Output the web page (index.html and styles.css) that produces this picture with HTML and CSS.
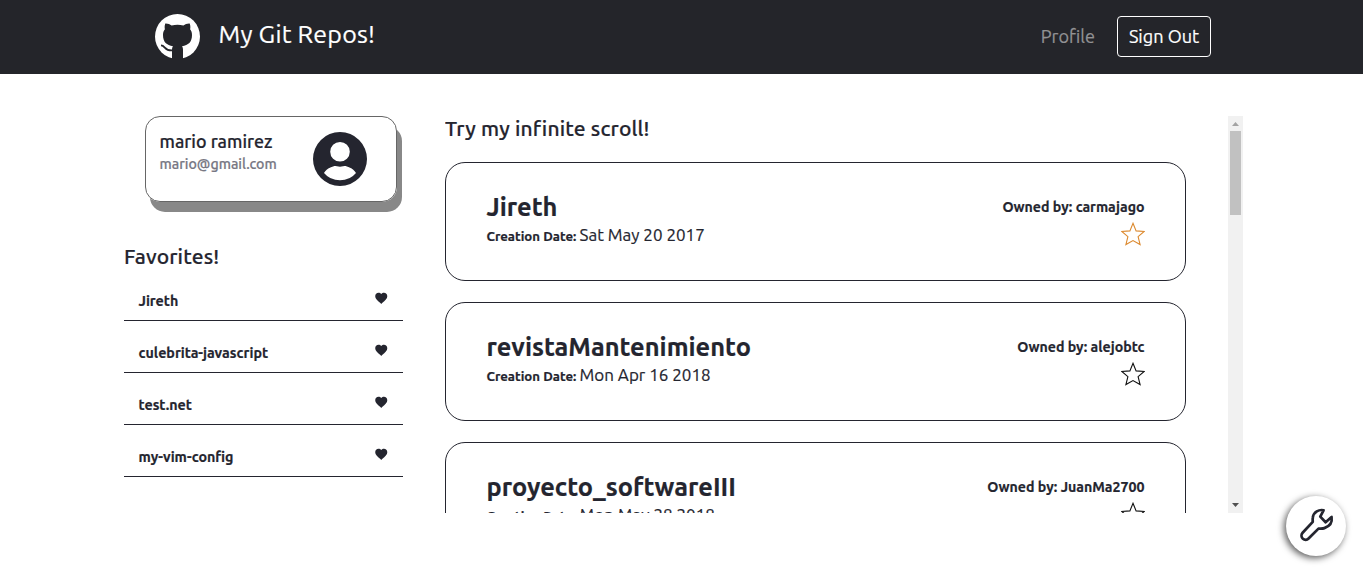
FILE: index.html
```html
<!DOCTYPE html>
<html lang="en">
<head>
<meta charset="utf-8">
<title>My Git Repos!</title>
<link rel="stylesheet" href="styles.css">
</head>
<body>
<svg width="0" height="0" class="defs">
  <symbol id="heart" viewBox="0 0 24 24"><path d="M12 21.35l-1.45-1.32C5.4 15.36 2 12.28 2 8.5 2 5.42 4.42 3 7.5 3c1.74 0 3.41.81 4.5 2.09C13.09 3.81 14.76 3 16.5 3 19.58 3 22 5.42 22 8.5c0 3.78-3.4 6.86-8.55 11.54L12 21.35z"/></symbol>
  <symbol id="star" viewBox="0 0 24 24"><path d="M12 1.3 15.1 8.9 23.2 9.5 17.1 14.7 19.1 22.6 12 18.6 4.9 22.6 6.9 14.7.8 9.5 8.9 8.9Z"/></symbol>
</svg>
<header class="navbar">
  <a class="brand">
    <svg class="logo" viewBox="0 0 45 45">
      <circle cx="22.5" cy="22.5" r="22.5"/>
      <path class="cat" d="M10.300 9.500C12.700 9.300 14.800 10.300 16.600 11.400Q22.500 10.300 28.400 11.400C30.200 10.300 32.300 9.300 34.700 9.500 35.500 11.500 35.500 13.500 35.100 15.300 36.400 16.900 37 18.700 37 21 37 28 33.300 31.300 27 32.200 27.800 33.300 28 34.500 28 36V46H17V36C17 34.500 17.200 33.300 18 32.200 11.700 31.300 8 28 8 21 8 18.700 8.600 16.900 9.900 15.300 9.500 13.500 9.500 11.500 10.300 9.500Z"/>
      <path class="tail" d="M6 31.400C10.500 31.400 9.500 37.200 17.500 36.400"/>
    </svg>
    <span class="brand-name">My Git Repos!</span>
  </a>
  <nav class="nav">
    <a class="profile-link">Profile</a>
    <button class="sign-out">Sign Out</button>
  </nav>
</header>
<main class="content">
  <aside class="sidebar">
    <section class="user-card">
      <div class="user-text">
        <div class="user-name">mario ramirez</div>
        <div class="user-mail">mario@gmail.com</div>
      </div>
      <svg class="avatar" viewBox="0 0 54 54"><path fill-rule="evenodd" d="M27 0a27 27 0 1 1 0 54a27 27 0 0 1 0-54ZM27 10a9.8 9.8 0 1 0 0 19.6a9.8 9.8 0 0 0 0-19.6ZM11 41Q17 48.3 27 48.3T43 41C40 36 34 34 31.500 34Q30.800 34 30 34.300 27 35.100 24 34.300 23.200 34 22.500 34C20 34 14 36 11 41Z"/></svg>
    </section>
    <h2 class="heading favorites-heading">Favorites!</h2>
    <ul class="favorites">
      <li class="favorite"><span>Jireth</span><svg class="heart"><use href="#heart"/></svg></li>
      <li class="favorite"><span>culebrita-javascript</span><svg class="heart"><use href="#heart"/></svg></li>
      <li class="favorite"><span>test.net</span><svg class="heart"><use href="#heart"/></svg></li>
      <li class="favorite"><span>my-vim-config</span><svg class="heart"><use href="#heart"/></svg></li>
    </ul>
  </aside>
  <section class="feed">
    <div class="repos">
      <h2 class="heading repos-heading">Try my infinite scroll!</h2>
      <article class="repo">
        <div><h3 class="repo-name">Jireth</h3><p class="created"><b>Creation Date:</b> Sat May 20 2017</p></div>
        <div class="owner"><span>Owned by: carmajago</span><svg class="star starred"><use href="#star"/></svg></div>
      </article>
      <article class="repo">
        <div><h3 class="repo-name">revistaMantenimiento</h3><p class="created"><b>Creation Date:</b> Mon Apr 16 2018</p></div>
        <div class="owner"><span>Owned by: alejobtc</span><svg class="star"><use href="#star"/></svg></div>
      </article>
      <article class="repo">
        <div><h3 class="repo-name">proyecto_softwareIII</h3><p class="created"><b>Creation Date:</b> Mon May 28 2018</p></div>
        <div class="owner"><span>Owned by: JuanMa2700</span><svg class="star"><use href="#star"/></svg></div>
      </article>
    </div>
    <div class="scrollbar">
      <svg class="arrow" viewBox="0 0 15 15"><path fill="#a3a3a3" d="M4 10 7.500 6 11 10Z"/></svg>
      <div class="thumb"></div>
      <svg class="arrow arrow-down" viewBox="0 0 15 15"><path fill="#505050" d="M4 5H11L7.500 9Z"/></svg>
    </div>
  </section>
</main>
<button class="tools">
  <svg class="wrench" viewBox="0 0 40 40"><path d="M25.200 5.400C20.500 4.200 15 7.500 14.200 12.500 13.900 14 14 15.500 14.100 17.300L3.700 28.500C2 30.400 2.300 33 4 34.600 5.700 36.100 8.200 36 9.800 34.400L20 24.200C22 24 24 24.400 26 23.700 31 22 34.400 18.500 33.400 12.300L27.300 17.700 21.800 11.900Z"/></svg>
</button>
</body>
</html>
```
FILE: styles.css
```css
* { box-sizing: border-box; }
body {
  margin: 0;
  height: 574px;
  overflow: hidden;
  background: #fff;
  color: #24252f;
  font-family: Ubuntu, "Noto Sans", sans-serif;
  font-size: 17px;
  -webkit-text-stroke: 0.2px;
}
h2, h3, p, ul { margin: 0; padding: 0; }
button { font: inherit; padding: 0; }
.defs { position: absolute; }

.navbar {
  height: 74px;
  padding: 0 152px 0 155px;
  display: flex;
  justify-content: space-between;
  align-items: flex-start;
  background: #24252a;
}
.brand { display: flex; align-items: center; gap: 18.500px; padding-top: 14px; }
.logo { width: 45px; height: 45px; fill: #fff; }
.cat { fill: #24252a; }
.tail { fill: none; stroke: #24252a; stroke-width: 1.800; }
.brand-name { color: #fff; font-size: 25px; line-height: 32px; padding-bottom: 6px; letter-spacing: 0.2px; }
.nav { display: flex; align-items: center; gap: 22px; font-size: 18.100px; padding-top: 16px; }
.profile-link { color: #929294; padding-bottom: 2px; }
.sign-out {
  width: 94px;
  height: 41px;
  padding-bottom: 2px;
  border: 1px solid #fff;
  border-radius: 4px;
  background: none;
  color: #fff;
}

.content { display: flex; padding: 42px 120px 0 124px; gap: 42px; }
.sidebar { width: 279px; }
.user-card {
  margin-left: 21px;
  width: 252px;
  height: 86px;
  padding: 15px 29px 0 13.500px;
  display: flex;
  justify-content: space-between;
  border: 1px solid #666;
  border-radius: 15px;
  box-shadow: 5px 10px #888;
}
.user-text { margin-top: -1px; }
.user-name { font-size: 17.850px; font-weight: 500; line-height: 20px; }
.user-mail { margin-top: 2px; font-size: 14.200px; font-weight: 500; line-height: 22px; color: #777783; }
.avatar { width: 54px; height: 54px; fill: #24252f; }

.heading { font-size: 21px; font-weight: 500; line-height: 24px; letter-spacing: 0.15px; }
.favorites-heading { margin-top: 42px; }
.favorites { list-style: none; margin-top: 1px; }
.favorite {
  height: 52px;
  padding: 21px 15px 0 14.500px;
  display: flex;
  justify-content: space-between;
  border-bottom: 1px solid #24252f;
  font-size: 14.250px;
  font-weight: 700;
  line-height: 22px;
}
.heart { width: 14.500px; height: 14.500px; fill: #24252f; margin-top: 0.500px; }

.feed { flex: 1; height: 397px; display: flex; justify-content: space-between; overflow: hidden; }
.repos { width: 741px; }
.repos-heading { margin-bottom: 22px; }
.repo {
  height: 119px;
  margin-bottom: 21px;
  padding: 28px 40.500px 0 40.500px;
  display: flex;
  justify-content: space-between;
  border: 1px solid #24252f;
  border-radius: 20px;
}
.repo-name { font-size: 25.400px; font-weight: 700; line-height: 32px; }
.created { line-height: 24px; white-space: nowrap; }
.created b { font-size: 13.200px; margin-right: -0.600px; }
.owner { display: flex; flex-direction: column; align-items: flex-end; font-size: 14.170px; font-weight: 700; line-height: 22px; padding-top: 5px; }
.star { width: 24px; height: 24px; margin-top: 4px; margin-right: -0.500px; fill: none; stroke: #111; stroke-width: 1.1; }
.starred { stroke: #dc8a30; }

.scrollbar { width: 15px; height: 397px; display: flex; flex-direction: column; align-items: center; background: #f1f1f1; }
.arrow { width: 15px; height: 15px; }
.arrow-down { margin-top: auto; }
.thumb { width: 11px; height: 84px; background: #c1c1c1; }

.tools {
  position: fixed;
  left: 1286px;
  top: 496px;
  width: 60px;
  height: 60px;
  display: flex;
  justify-content: center;
  align-items: center;
  border: 0;
  border-radius: 50%;
  background: #fff;
  box-shadow: -2px 2px 7px rgba(0, 0, 0, 0.65);
}
.wrench { width: 39px; height: 39px; margin-left: 5px; margin-top: -3px; fill: none; stroke: #24252f; stroke-width: 2.800; stroke-linejoin: round; }
```
